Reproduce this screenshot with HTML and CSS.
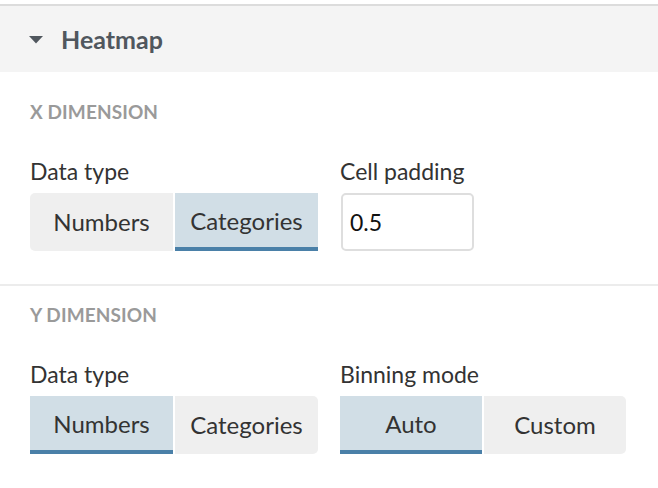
FILE: index.html
```html
<!DOCTYPE html>
<html>
<head>
<meta charset="utf-8">
<link rel="stylesheet" href="styles.css">
</head>
<body>
<div class="panel">
  <div class="header">
    <svg class="caret" width="14" height="8" viewBox="0 0 14 8"><path d="M0 0 H14 L7 7.5 Z" fill="#50575e"/></svg>
    <span class="title">Heatmap</span>
  </div>
  <div class="section first">
    <div class="section-title">X DIMENSION</div>
    <div class="fields">
      <div class="field">
        <div class="label">Data type</div>
        <div class="seg">
          <div class="btn">Numbers</div>
          <div class="btn on">Categories</div>
        </div>
      </div>
      <div class="field">
        <div class="label">Cell padding</div>
        <input class="input" type="text" value="0.5">
      </div>
    </div>
  </div>
  <div class="section second">
    <div class="section-title">Y DIMENSION</div>
    <div class="fields">
      <div class="field">
        <div class="label">Data type</div>
        <div class="seg">
          <div class="btn on">Numbers</div>
          <div class="btn">Categories</div>
        </div>
      </div>
      <div class="field">
        <div class="label">Binning mode</div>
        <div class="seg">
          <div class="btn on">Auto</div>
          <div class="btn">Custom</div>
        </div>
      </div>
    </div>
  </div>
</div>
</body>
</html>
```
FILE: styles.css
```css
html, body { margin: 0; padding: 0; background: #fff; }
body { font-family: Lato, "Noto Sans", sans-serif; color: #333; }
.panel { padding-top: 4px; }
.header {
  border-top: 2px solid #dcdcdc;
  height: 68px;
  background: #f4f4f4;
  display: flex;
  align-items: center;
  padding-left: 29px;
  box-sizing: border-box;
}
.caret { margin-right: 18px; margin-top: 1px; }
.title { font-size: 25px; font-weight: 700; color: #50575e; }
.section { padding: 0 0 0 30px; }
.section.first { height: 214px; padding-top: 28px; box-sizing: border-box; border-bottom: 2px solid #ececec; }
.section.second { padding-top: 17px; }
.section-title { font-size: 19px; font-weight: 700; color: #9a9a9a; line-height: 24px; letter-spacing: 0.1px; }
.fields { display: grid; grid-template-columns: 288px 286px; column-gap: 22px; margin-top: 33px; }
.label { font-size: 23px; line-height: 28px; margin-bottom: 8px; color: #333; }
.seg { display: flex; gap: 2px; height: 58px; }
.btn {
  flex: 1;
  background: #efefef;
  display: flex;
  align-items: center;
  justify-content: center;
  font-size: 24px;
  color: #333;
  box-sizing: border-box;
  padding-bottom: 2px;
}
.btn:first-child { border-radius: 5px 0 0 5px; }
.btn:last-child { border-radius: 0 5px 5px 0; }
.btn.on { background: #d1dee6; border-bottom: 4px solid #4a80a8; border-radius: 0; padding-bottom: 0; }
.input {
  display: block;
  width: 133px;
  height: 58px;
  box-sizing: border-box;
  border: 2px solid #dedede;
  border-radius: 5px;
  font-family: Lato, "Noto Sans", sans-serif;
  font-size: 23px;
  color: #111;
  padding: 0 7px;
  margin-left: 1px;
  outline: none;
}
```
